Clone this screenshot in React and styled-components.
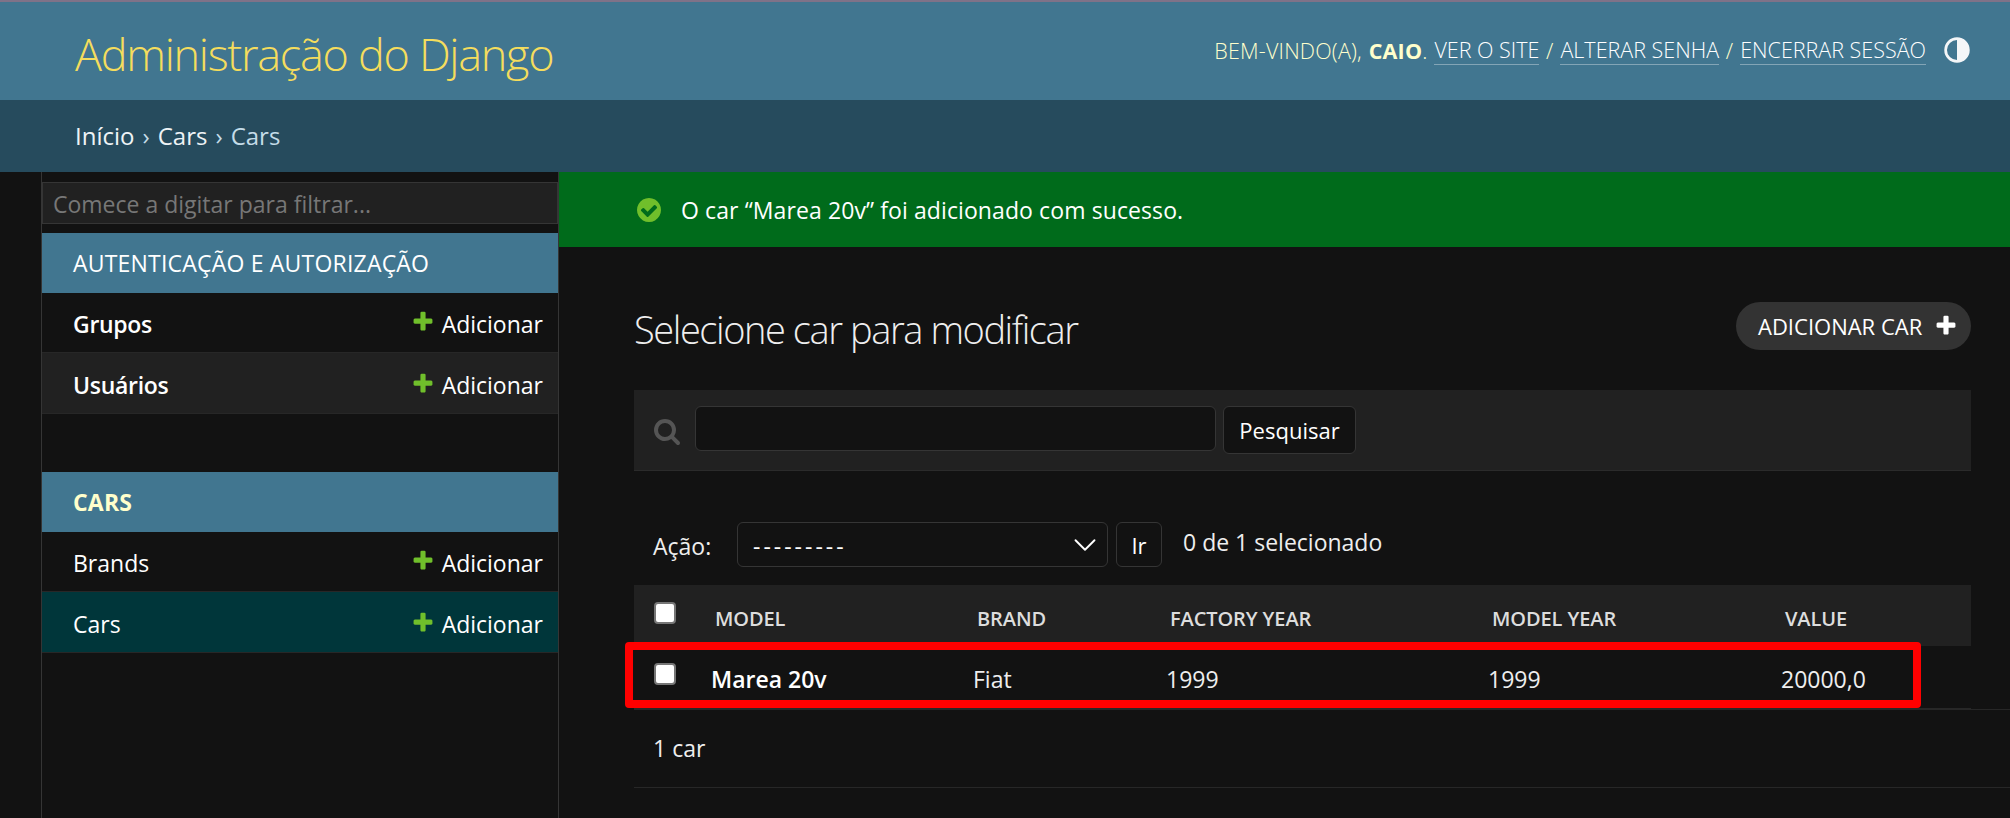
import React from "react";
import styled, { createGlobalStyle } from "styled-components";
import { ChevronDown } from "lucide-react";

const GlobalStyle = createGlobalStyle`
    html, body {
        margin: 0;
        height: 100%;
        overflow: hidden;
        background: #121212;
        color: #eeeeee;
        font-family: "Open Sans", "Noto Sans", "Liberation Sans", sans-serif;
        font-size: 23px;
    }
    * { box-sizing: border-box; }
`;

const Header = styled.header`
    height: 100px;
    border-top: 2px solid #7f7288;
    background: #417690;
    display: flex;
    align-items: center;
    justify-content: space-between;
    padding: 0 40px 0 75px;
`;
const Branding = styled.h1`
    margin: 4px 0 0;
    font-size: 45px;
    font-weight: 300;
    letter-spacing: -1.3px;
    color: #f5dd5d;
`;
const UserTools = styled.div`
    display: flex;
    align-items: center;
    margin-bottom: 2px;
    font-size: 21.5px;
    font-weight: 300;
    letter-spacing: 0.2px;
    color: #ffffcc;
    text-transform: uppercase;
    white-space: pre;
`;
const UserName = styled.strong`
    margin-left: 1px;
    font-weight: 700;
`;
const ToolLink = styled.a`
    margin: 0 1px;
    color: #ffffff;
    text-decoration: none;
    letter-spacing: 0;
    border-bottom: 1px solid rgba(255, 255, 255, 0.35);
    line-height: 28px;
`;
const ThemeIcon = styled.svg`
    width: 26px;
    height: 26px;
    margin-left: 17px;
`;
const Breadcrumbs = styled.nav`
    height: 72px;
    background: #264b5d;
    color: #c4dce8;
    display: flex;
    align-items: center;
    padding: 0 0 2px 75px;
    font-size: 24px;
    span { color: #eef3f6; }
`;
const Crumb = styled.i`
    font-style: normal;
    margin: 0 8px;
`;
const Body = styled.div`
    display: flex;
    height: 646px;
`;
const Sidebar = styled.aside`
    width: 518px;
    margin-left: 41px;
    flex-shrink: 0;
    padding-top: 10px;
    border-left: 1px solid #353535;
    border-right: 1px solid #353535;
`;
const Filter = styled.input`
    display: block;
    width: 100%;
    height: 42px;
    padding: 2px 10px 0;
    background: #212121;
    border: 1px solid #353535;
    color: #eeeeee;
    font: 400 23px "Open Sans", sans-serif;
    &::placeholder { color: #777777; opacity: 1; }
`;
const AppModule = styled.section`
    margin-top: ${p => p.$gap}px;
`;
const AppCaption = styled.div`
    height: 60px;
    background: #417690;
    display: flex;
    align-items: center;
    padding-left: 31px;
    font-weight: ${p => (p.$current ? 700 : 400)};
    color: ${p => (p.$current ? "#ffffcc" : "#ffffff")};
    letter-spacing: 0.2px;
`;
const ModelRow = styled.div`
    height: ${p => (p.$tall ? 61 : 60)}px;
    display: flex;
    align-items: center;
    justify-content: space-between;
    padding: ${p => (p.$tall ? 4 : 2)}px 15px 0 31px;
    background: ${p => (p.$selected ? "#00363a" : p.$alt ? "#212121" : "transparent")};
    border-bottom: 1px solid #272727;
`;
const ModelName = styled.a`
    color: #ffffff;
    font-weight: ${p => (p.$bold ? 600 : 400)};
    letter-spacing: ${p => (p.$bold ? "-0.3px" : "0")};
`;
const AddLink = styled.a`
    display: flex;
    align-items: center;
    color: #ffffff;
`;
const PlusIcon = styled.svg`
    width: 24px;
    height: 24px;
    margin: 0 7px 3px 0;
`;
const Main = styled.main`
    flex: 1;
    min-width: 0;
`;
const Message = styled.div`
    height: 75px;
    background: #006b1b;
    display: flex;
    align-items: center;
    gap: 18px;
    padding-left: 76px;
    color: #ffffff;
    letter-spacing: 0.1px;
`;
const MessageIcon = styled.svg`
    width: 28px;
    height: 28px;
    flex-shrink: 0;
`;
const Content = styled.div`
    padding: 55px 39px 0 75px;
`;
const TitleRow = styled.div`
    height: 48px;
    display: flex;
    align-items: center;
    justify-content: space-between;
`;
const Title = styled.h2`
    margin: 5px 0 0;
    font-size: 38px;
    font-weight: 300;
    letter-spacing: -1.43px;
    color: #eeeeee;
`;
const ObjectTool = styled.a`
    height: 48px;
    width: 235px;
    border-radius: 24px;
    background: #333333;
    display: flex;
    align-items: center;
    justify-content: space-between;
    padding: 0 13px 0 22px;
    color: #ffffff;
    font-size: 22px;
`;
const ToolPlus = styled.svg`
    width: 24px;
    height: 24px;
`;
const SearchBar = styled.form`
    height: 81px;
    margin-top: 40px;
    padding: 16px 0 0 19px;
    background: #212121;
    border-bottom: 1px solid #2b2b2b;
    display: flex;
    align-items: flex-start;
`;
const SearchIcon = styled.svg`
    width: 28px;
    height: 28px;
    margin: 11px 14px 0 0;
`;
const SearchInput = styled.input`
    width: 521px;
    height: 45px;
    background: #121212;
    border: 1px solid #353535;
    border-radius: 6px;
    color: #eeeeee;
`;
const SmallButton = styled.button`
    height: ${p => p.$height}px;
    width: ${p => p.$width}px;
    margin-left: ${p => p.$gap}px;
    background: #121212;
    border: 1px solid #353535;
    border-radius: 6px;
    color: #ffffff;
    font: 400 22px "Open Sans", sans-serif;
    padding: 0;
`;
const Actions = styled.div`
    height: 45px;
    margin-top: 51px;
    padding-left: 19px;
    display: flex;
    align-items: center;
`;
const ActionLabel = styled.label`
    width: 84px;
    margin-top: 2px;
`;
const SelectWrap = styled.div`
    position: relative;
    width: 371px;
    height: 45px;
`;
const ActionSelect = styled.select`
    appearance: none;
    width: 100%;
    height: 100%;
    padding: 3px 0 0 15px;
    background: #121212;
    border: 1px solid #353535;
    border-radius: 6px;
    color: #ffffff;
    font: 400 23px "Open Sans", sans-serif;
    letter-spacing: 3px;
`;
const SelectArrow = styled(ChevronDown)`
    position: absolute;
    right: 4px;
    top: 4px;
    color: #ffffff;
    pointer-events: none;
`;
const Counter = styled.span`
    margin: 0 0 5px 21px;
`;
const Results = styled.table`
    width: 1337px;
    margin-top: 18px;
    border-collapse: collapse;
    table-layout: fixed;
`;
const HeadCell = styled.th`
    height: 61px;
    padding: 5px 0 0 17px;
    background: #212121;
    text-align: left;
    font-size: 20px;
    font-weight: 600;
    letter-spacing: -0.1px;
    color: #dddddd;
`;
const Cell = styled.td`
    height: 62px;
    padding: 4px 0 0 13px;
    border-bottom: 1px solid #272727;
    font-weight: ${p => (p.$bold ? 600 : 400)};
    color: ${p => (p.$bold ? "#ffffff" : "#eeeeee")};
`;
const CheckCell = styled.td`
    height: 62px;
    padding: 0 0 6px 19.5px;
    border-bottom: 1px solid #272727;
`;
const CheckHead = styled.th`
    padding: 0 0 6px 19.5px;
    background: #212121;
`;
const Box = styled.input.attrs({ type: "checkbox" })`
    appearance: none;
    display: block;
    width: 22px;
    height: 22px;
    margin: 0;
    background: #ffffff;
    border: 2px solid #767676;
    border-radius: 4px;
`;
const Paginator = styled.p`
    height: 79px;
    margin: 0 -39px 0 0;
    padding: 0 0 0 19px;
    display: flex;
    align-items: center;
    border-top: 1px solid #272727;
    border-bottom: 1px solid #272727;
`;
// anotacao vermelha por cima da linha da tabela
const Highlight = styled.div`
    position: absolute;
    left: 625px;
    top: 642px;
    width: 1296px;
    height: 66px;
    border: 8px solid #ff0000;
    border-radius: 4px;
    pointer-events: none;
`;

const plus = "M1600 736v192q0 40-28 68t-68 28h-416v416q0 40-28 68t-68 28h-192q-40 0-68-28t-28-68v-416h-416q-40 0-68-28t-28-68v-192q0-40 28-68t68-28h416v-416q0-40 28-68t68-28h192q40 0 68 28t28 68v416h416q40 0 68 28t28 68z";

const Plus = ({ as = PlusIcon, fill = "#70bf2b" }) => {
    const Icon = as;
    return (
        <Icon viewBox="0 0 1792 1792">
            <path fill={fill} d={plus} />
        </Icon>
    );
};

const Model = ({ name, bold, alt, selected, tall }) => (
    <ModelRow $alt={alt} $selected={selected} $tall={tall}>
        <ModelName $bold={bold}>{name}</ModelName>
        <AddLink><Plus />Adicionar</AddLink>
    </ModelRow>
);

const App = () => (
    <>
        <GlobalStyle />
        <Header>
            <Branding>Administração do Django</Branding>
            <UserTools>
                Bem-vindo(a), <UserName>Caio</UserName>. <ToolLink>Ver o site</ToolLink> / <ToolLink>Alterar senha</ToolLink> / <ToolLink>Encerrar sessão</ToolLink>
                <ThemeIcon viewBox="1 1 24 24">
                    <circle cx="13" cy="13" r="10.5" fill="none" stroke="#f4f6f8" strokeWidth="2.5" />
                    <path fill="#f4f6f8" d="M13 2a11 11 0 0 1 0 22z" />
                </ThemeIcon>
            </UserTools>
        </Header>
        <Breadcrumbs><span>Início</span><Crumb>›</Crumb><span>Cars</span><Crumb>›</Crumb>Cars</Breadcrumbs>
        <Body>
            <Sidebar>
                <Filter placeholder="Comece a digitar para filtrar..." />
                <AppModule $gap={9}>
                    <AppCaption>AUTENTICAÇÃO E AUTORIZAÇÃO</AppCaption>
                    <Model name="Grupos" bold />
                    <Model name="Usuários" bold alt tall />
                </AppModule>
                <AppModule $gap={58}>
                    <AppCaption $current>CARS</AppCaption>
                    <Model name="Brands" />
                    <Model name="Cars" selected tall />
                </AppModule>
            </Sidebar>
            <Main>
                <Message>
                    <MessageIcon viewBox="0 0 1792 1792">
                        <path fill="#70bf2b" d="M1412 734q0-28-18-46l-91-90q-19-19-45-19t-45 19l-408 407-226-226q-19-19-45-19t-45 19l-91 90q-18 18-18 46 0 27 18 45l362 362q19 19 45 19 27 0 46-19l543-543q18-18 18-45zm252 162q0 209-103 385.5t-279.5 279.5-385.5 103-385.5-103-279.5-279.5-103-385.5 103-385.5 279.5-279.5 385.5-103 385.5 103 279.5 279.5 103 385.5z" />
                    </MessageIcon>
                    O car “Marea 20v” foi adicionado com sucesso.
                </Message>
                <Content>
                    <TitleRow>
                        <Title>Selecione car para modificar</Title>
                        <ObjectTool>ADICIONAR CAR <Plus as={ToolPlus} fill="#ffffff" /></ObjectTool>
                    </TitleRow>
                    <SearchBar>
                        <SearchIcon viewBox="0 0 1792 1792">
                            <path fill="#555555" d="M1216 832q0-185-131.5-316.5t-316.5-131.5-316.5 131.5-131.5 316.5 131.5 316.5 316.5 131.5 316.5-131.5 131.5-316.5zm512 832q0 52-38 90t-90 38q-54 0-90-38l-343-342q-179 124-399 124-143 0-273.5-55.5t-225-150-150-225-55.5-273.5 55.5-273.5 150-225 225-150 273.5-55.5 273.5 55.5 225 150 150 225 55.5 273.5q0 220-124 399l343 343q37 37 37 90z" />
                        </SearchIcon>
                        <SearchInput />
                        <SmallButton type="button" $gap={7} $width={133} $height={48}>Pesquisar</SmallButton>
                    </SearchBar>
                    <Actions>
                        <ActionLabel>Ação:</ActionLabel>
                        <SelectWrap>
                            <ActionSelect><option>---------</option></ActionSelect>
                            <SelectArrow size={38} strokeWidth={1.2} />
                        </SelectWrap>
                        <SmallButton type="button" $gap={8} $width={46} $height={45}>Ir</SmallButton>
                        <Counter>0 de 1 selecionado</Counter>
                    </Actions>
                    <Results>
                        <colgroup>
                            <col width="64" /><col width="262" /><col width="193" /><col width="322" /><col width="293" /><col width="203" />
                        </colgroup>
                        <thead>
                            <tr>
                                <CheckHead><Box /></CheckHead>
                                <HeadCell>MODEL</HeadCell>
                                <HeadCell>BRAND</HeadCell>
                                <HeadCell>FACTORY YEAR</HeadCell>
                                <HeadCell>MODEL YEAR</HeadCell>
                                <HeadCell>VALUE</HeadCell>
                            </tr>
                        </thead>
                        <tbody>
                            <tr>
                                <CheckCell><Box /></CheckCell>
                                <Cell $bold>Marea 20v</Cell>
                                <Cell>Fiat</Cell>
                                <Cell>1999</Cell>
                                <Cell>1999</Cell>
                                <Cell>20000,0</Cell>
                            </tr>
                        </tbody>
                    </Results>
                    <Paginator>1 car</Paginator>
                </Content>
            </Main>
        </Body>
        <Highlight />
    </>
);

export default App;
